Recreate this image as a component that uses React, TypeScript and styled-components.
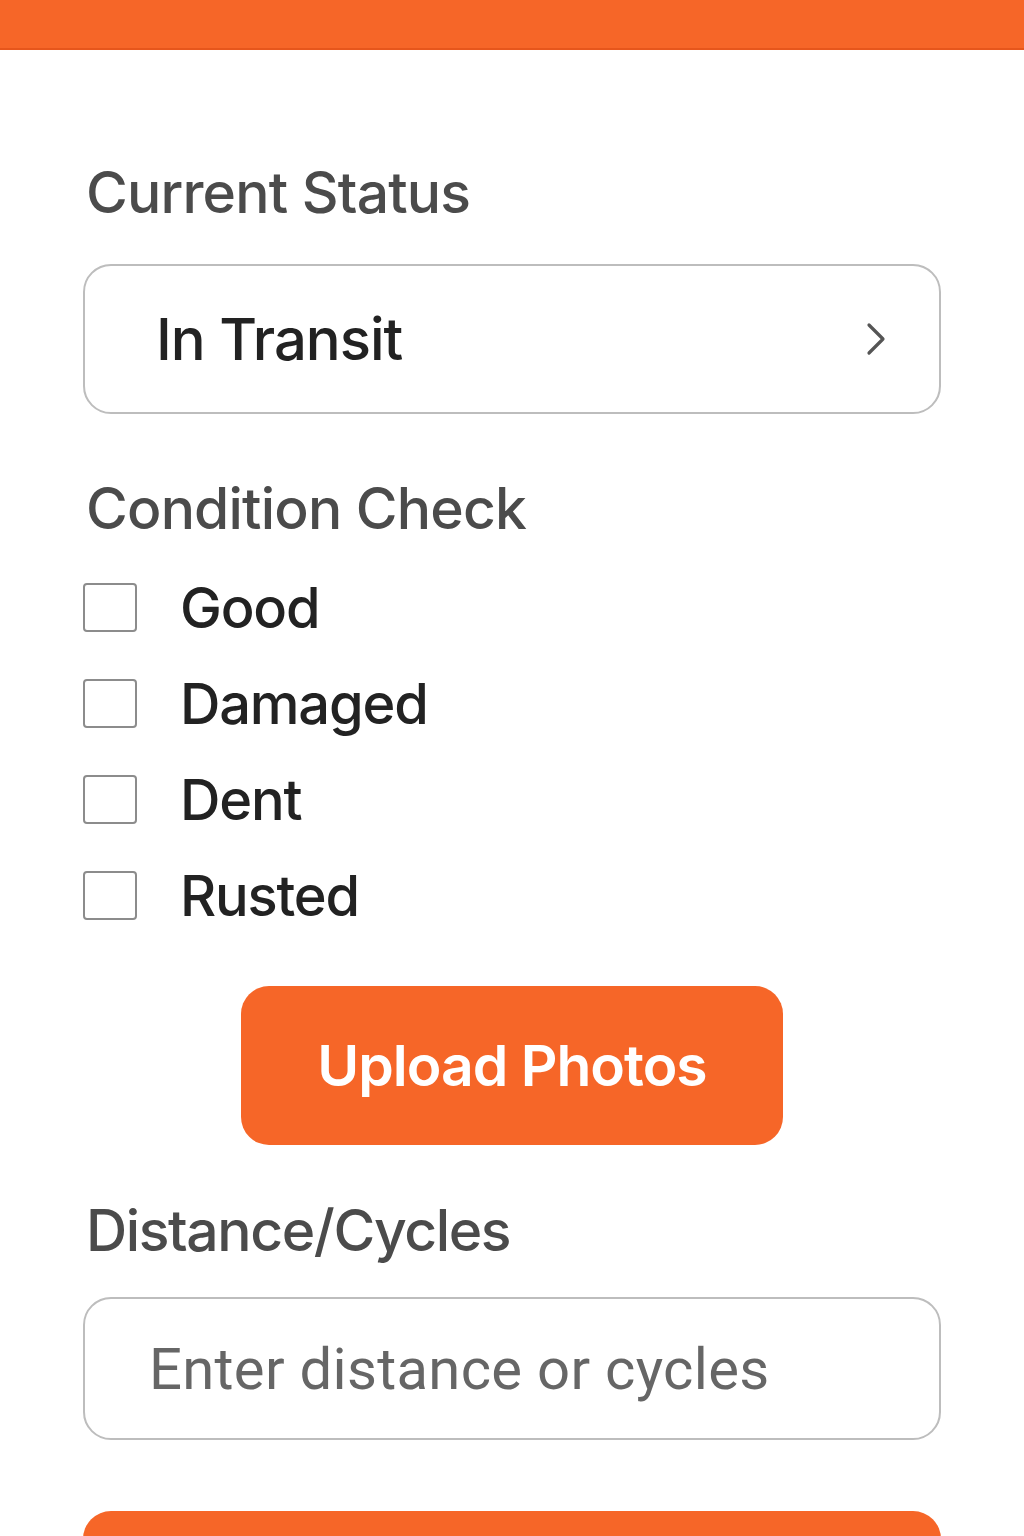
import React from "react";
import styled, { createGlobalStyle } from "styled-components";

const Global = createGlobalStyle`
  html, body { margin: 0; padding: 0; background: #ffffff; }
  body { font-family: Inter, "Liberation Sans", Arial, sans-serif; }
  * { box-sizing: border-box; }
`;

const ORANGE = "#f66628";

const Page = styled.div`
  width: 1024px;
  min-height: 1536px;
  overflow: hidden;
  background: #fff;
`;

const TopBar = styled.header`
  height: 50px;
  background: ${ORANGE};
  border-bottom: 2px solid #e6561c;
`;

const Main = styled.main`
  display: flex;
  flex-direction: column;
  padding: 0 83px;
`;

const SectionLabel = styled.h2<{ $top: number; $spacing?: number }>`
  margin: ${(p) => p.$top}px 0 0 3px;
  font-size: 57px;
  line-height: 58px;
  font-weight: 500;
  color: #4b4b4b;
  letter-spacing: ${(p) => p.$spacing ?? -0.8}px;
`;

const Select = styled.button`
  margin-top: 42px;
  height: 150px;
  width: 100%;
  display: flex;
  align-items: center;
  justify-content: space-between;
  padding: 0 50px 0 71px;
  border: 2px solid #bdbdbd;
  border-radius: 28px;
  background: #fff;
  font-family: inherit;
  font-size: 58px;
  font-weight: 500;
  letter-spacing: -1px;
  color: #222;
  cursor: pointer;
`;

const Options = styled.ul`
  list-style: none;
  margin: 45px 0 0 0;
  padding: 0;
  display: flex;
  flex-direction: column;
  gap: 47px;
`;

const OptionRow = styled.li`
  display: flex;
  align-items: center;
  height: 49px;
  gap: 43px;
`;

const Box = styled.span`
  width: 54px;
  height: 49px;
  border: 2px solid #8c8c8c;
  border-radius: 4px;
  flex: none;
`;

const OptionText = styled.span`
  font-size: 56px;
  font-weight: 500;
  letter-spacing: -1.2px;
  color: #222;
  line-height: 1;
`;

const PrimaryButton = styled.button`
  align-self: center;
  margin-top: 66px;
  width: 542px;
  height: 159px;
  border: none;
  border-radius: 28px;
  background: ${ORANGE};
  color: #fff;
  font-family: inherit;
  font-size: 57px;
  font-weight: 600;
  letter-spacing: -1px;
  cursor: pointer;
`;

const InputBox = styled.input`
  margin-top: 37px;
  width: 100%;
  height: 143px;
  border: 2px solid #bdbdbd;
  border-radius: 28px;
  padding: 0 0 0 64px;
  font-family: Roboto, "Liberation Sans", sans-serif;
  font-size: 58px;
  letter-spacing: 0.3px;
  color: #222;
  outline: none;
  &::placeholder { color: #666; }
`;

const BottomButton = styled.button`
  margin-top: 71px;
  width: 100%;
  height: 120px;
  border: none;
  border-radius: 28px;
  background: ${ORANGE};
`;

const Chevron = () => (
  <svg width="24" height="34" viewBox="0 0 24 34" fill="none">
    <path d="M4 3 L18 17 L4 31" stroke="#555" strokeWidth="3.2" strokeLinecap="round" strokeLinejoin="round" />
  </svg>
);

const conditions = ["Good", "Damaged", "Dent", "Rusted"];

export default function App() {
  return (
    <Page>
      <Global />
      <TopBar />
      <Main>
        <SectionLabel $top={114}>Current Status</SectionLabel>
        <Select type="button">
          <span>In Transit</span>
          <Chevron />
        </Select>
        <SectionLabel $top={66}>Condition Check</SectionLabel>
        <Options>
          {conditions.map((c) => (
            <OptionRow key={c}>
              <Box />
              <OptionText>{c}</OptionText>
            </OptionRow>
          ))}
        </Options>
        <PrimaryButton type="button">Upload Photos</PrimaryButton>
        <SectionLabel $top={57} $spacing={-1.4}>Distance/Cycles</SectionLabel>
        <InputBox placeholder="Enter distance or cycles" />
        <BottomButton type="button" aria-label="Submit" />
      </Main>
    </Page>
  );
}
